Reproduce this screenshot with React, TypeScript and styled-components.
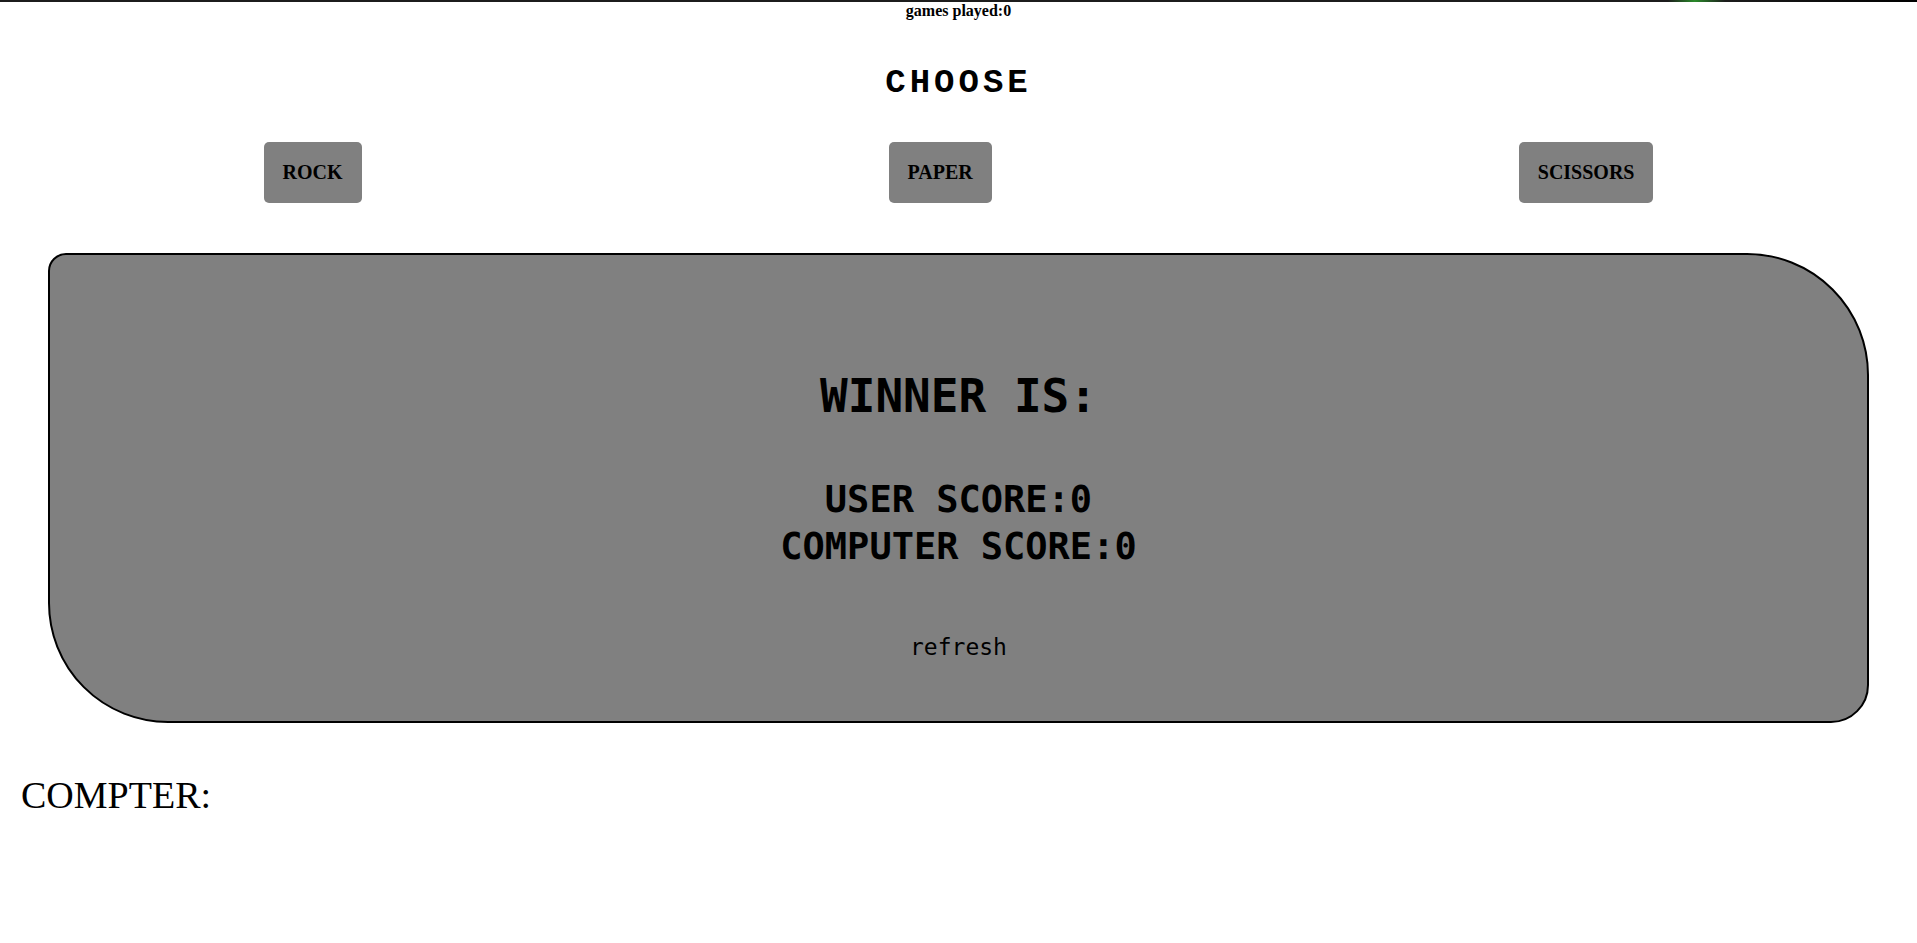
import React from "react";
import styled, { createGlobalStyle } from "styled-components";

const GlobalStyle = createGlobalStyle`
  html, body {
    margin: 0;
    padding: 0;
    background: #ffffff;
    font-family: "Liberation Serif", "Times New Roman", serif;
    color: #000;
  }
`;

const Page = styled.div`
  display: flex;
  flex-direction: column;
  min-height: 943px;
`;

const TopEdge = styled.div`
  height: 2px;
  background: linear-gradient(
    to right,
    #1c1c1c 0%,
    #1c1c1c 87%,
    #2a8a2a 88.4%,
    #1c1c1c 90%,
    #000 100%
  );
`;

const GamesPlayed = styled.div`
  text-align: center;
  font-family: "Liberation Serif", "Times New Roman", serif;
  font-weight: bold;
  font-size: 16px;
  line-height: 18px;
`;

const ChooseTitle = styled.h2`
  margin: 44px 0 0;
  text-align: center;
  font-family: "Liberation Mono", "Courier New", monospace;
  font-weight: bold;
  font-size: 34px;
  letter-spacing: 4px;
  line-height: 39px;
`;

const ChoiceRow = styled.div`
  display: flex;
  justify-content: space-around;
  margin-top: 39px;
`;

const ChoiceButton = styled.button`
  background: #808080;
  border: none;
  border-radius: 5px;
  padding: 19px 19px;
  font-family: "Liberation Serif", "Times New Roman", serif;
  font-weight: bold;
  font-size: 20px;
  line-height: 23px;
  color: #000;
  cursor: pointer;
`;

const ResultPanel = styled.section`
  box-sizing: border-box;
  width: 95%;
  margin: 50px auto 0;
  border: 2px solid #000;
  border-radius: 18px 122px 38px 120px;
  background: #808080;
  display: flex;
  flex-direction: column;
  align-items: center;
  padding: 114px 0 60px;
  font-family: "DejaVu Sans Mono", "Liberation Mono", monospace;
`;

const WinnerLine = styled.h1`
  margin: 0;
  font-size: 46px;
  line-height: 54px;
  font-weight: bold;
`;

const ScoreBlock = styled.div`
  margin-top: 53px;
  display: flex;
  flex-direction: column;
  align-items: center;
`;

const ScoreLine = styled.div`
  font-size: 37px;
  line-height: 47px;
  font-weight: bold;
`;

const RefreshButton = styled.button`
  margin-top: 64px;
  background: transparent;
  border: none;
  padding: 0;
  font-family: "DejaVu Sans Mono", "Liberation Mono", monospace;
  font-size: 23px;
  line-height: 27px;
  color: #000;
  cursor: pointer;
`;

const ComputerLabel = styled.div`
  margin-top: 51px;
  padding-left: 21px;
  font-family: "Liberation Serif", "Times New Roman", serif;
  font-size: 38px;
  line-height: 42px;
`;

export default function App() {
  return (
    <>
      <GlobalStyle />
      <Page>
        <TopEdge />
        <GamesPlayed>games played:0</GamesPlayed>
        <ChooseTitle>CHOOSE</ChooseTitle>
        <ChoiceRow>
          <ChoiceButton>ROCK</ChoiceButton>
          <ChoiceButton>PAPER</ChoiceButton>
          <ChoiceButton>SCISSORS</ChoiceButton>
        </ChoiceRow>
        <ResultPanel>
          <WinnerLine>WINNER IS:</WinnerLine>
          <ScoreBlock>
            <ScoreLine>USER SCORE:0</ScoreLine>
            <ScoreLine>COMPUTER SCORE:0</ScoreLine>
          </ScoreBlock>
          <RefreshButton>refresh</RefreshButton>
        </ResultPanel>
        <ComputerLabel>COMPTER:</ComputerLabel>
      </Page>
    </>
  );
}
